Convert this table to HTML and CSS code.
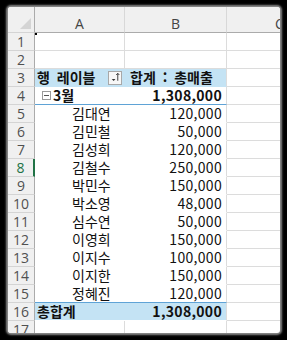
FILE: index.html
```html
<!DOCTYPE html>
<html lang="ko">
<head>
<meta charset="utf-8">
<link rel="stylesheet" href="styles.css">
</head>
<body>
<div class="frame">
  <div class="row head">
    <div class="rh corner"><span class="tri"></span></div>
    <div class="ch">A</div>
    <div class="ch">B</div>
    <div class="ch">C</div>
  </div>
  <div class="row"><div class="rh">1</div><div class="c first"></div><div class="c"></div><div class="c"></div></div>
  <div class="row"><div class="rh">2</div><div class="c"></div><div class="c"></div><div class="c"></div></div>
  <div class="row">
    <div class="rh">3</div>
    <div class="c pa top"><span class="b ws">행 레이블</span>
      <span class="fbtn"><svg width="13" height="13" viewBox="0 0 13 13"><path d="M3 8h4l-2 2.2z" fill="#333"/><path d="M9.5 2v8M7.8 3.8L9.5 2l1.7 1.8" stroke="#333" stroke-width="1" fill="none"/></svg></span>
    </div>
    <div class="c pb top"><span class="b ws">합계 : 총매출</span></div>
    <div class="c"></div>
  </div>
  <div class="row">
    <div class="rh">4</div>
    <div class="c pa grp"><span class="mbox"></span><span class="b">3월</span></div>
    <div class="c pb grp num b">1,308,000</div>
    <div class="c"></div>
  </div>
  <div class="row"><div class="rh">5</div><div class="c pa nm">김대연</div><div class="c pb num">120,000</div><div class="c"></div></div>
  <div class="row"><div class="rh">6</div><div class="c pa nm">김민철</div><div class="c pb num">50,000</div><div class="c"></div></div>
  <div class="row"><div class="rh">7</div><div class="c pa nm">김성희</div><div class="c pb num">120,000</div><div class="c"></div></div>
  <div class="row"><div class="rh sel">8</div><div class="c pa nm">김철수</div><div class="c pb num">250,000</div><div class="c"></div></div>
  <div class="row"><div class="rh">9</div><div class="c pa nm">박민수</div><div class="c pb num">150,000</div><div class="c"></div></div>
  <div class="row"><div class="rh">10</div><div class="c pa nm">박소영</div><div class="c pb num">48,000</div><div class="c"></div></div>
  <div class="row"><div class="rh">11</div><div class="c pa nm">심수연</div><div class="c pb num">50,000</div><div class="c"></div></div>
  <div class="row"><div class="rh">12</div><div class="c pa nm">이영희</div><div class="c pb num">150,000</div><div class="c"></div></div>
  <div class="row"><div class="rh">13</div><div class="c pa nm">이지수</div><div class="c pb num">100,000</div><div class="c"></div></div>
  <div class="row"><div class="rh">14</div><div class="c pa nm">이지한</div><div class="c pb num">150,000</div><div class="c"></div></div>
  <div class="row"><div class="rh">15</div><div class="c pa nm last">정혜진</div><div class="c pb num last">120,000</div><div class="c"></div></div>
  <div class="row">
    <div class="rh">16</div>
    <div class="c pa tot"><span class="b">총합계</span></div>
    <div class="c pb tot num b">1,308,000</div>
    <div class="c"></div>
  </div>
  <div class="row"><div class="rh">17</div><div class="c"></div><div class="c"></div><div class="c"></div></div>
</div>
</body>
</html>
```

FILE: styles.css
```css
html, body {
  margin: 0;
  padding: 0;
  background: #000;
}
body {
  width: 287px;
  height: 340px;
  overflow: hidden;
  padding: 7px 0 0 8px;
  box-sizing: border-box;
  font-family: "Noto Sans CJK KR", "Noto Sans", sans-serif;
}
.frame {
  width: 272px;
  height: 326px;
  background: #fff;
  overflow: hidden;
  border-radius: 3px;
  box-shadow: 0 0 2px 2px #8a8a8a;
}
.row {
  display: grid;
  grid-template-columns: 27px 90px 102px 106px;
  height: 18px;
}
.row > div {
  box-sizing: border-box;
  height: 18px;
  border-right: 1px solid #dcdcdc;
  border-bottom: 1px solid #dcdcdc;
  font-size: 14px;
  line-height: 17px;
  white-space: nowrap;
  color: #111;
}
.row.head {
  height: 26px;
}
.row.head > div {
  height: 26px;
  background: #f0f0f0;
  border-bottom: 1px solid #ababab;
  border-right: 1px solid #d8d8d8;
  text-align: center;
  line-height: 14px;
  padding-top: 10px;
  font-family: "Open Sans", "Noto Sans", sans-serif;
  font-size: 14px;
  color: #444;
}
.corner {
  position: relative;
}
.tri {
  position: absolute;
  right: 3px;
  bottom: 3px;
  width: 0;
  height: 0;
  border-left: 11px solid transparent;
  border-bottom: 11px solid #d4d4d4;
}
.first {
  position: relative;
}
.first::before {
  content: "";
  position: absolute;
  left: 0;
  top: 0;
  width: 2px;
  height: 2px;
  background: #000;
}
.rh {
  background: #f0f0f0;
  text-align: center;
  font-family: "Open Sans", "Noto Sans", sans-serif;
  font-size: 14px !important;
  color: #505050 !important;
  border-right: 1px solid #ababab !important;
  border-bottom-color: #d4d4d4 !important;
}
.rh.sel {
  color: #217346 !important;
  border-right: 2px solid #217346 !important;
}
.b {
  font-weight: 700;
}
.ws {
  word-spacing: 3px;
}
.pa {
  border-right: none !important;
  border-bottom-color: #fff !important;
  padding-left: 2px;
  display: flex;
  align-items: center;
}
.pb {
  border-bottom-color: #fff !important;
  padding-left: 5px;
}
.top {
  background: #c4e3f4;
  border-bottom-color: #c4e3f4 !important;
}
.pa.top {
  justify-content: space-between;
  padding-right: 3px;
}
.grp {
  border-bottom-color: #5fa3d6 !important;
}
.last {
  border-bottom-color: #5fa3d6 !important;
}
.tot {
  background: #c4e3f4;
}
.num {
  text-align: right;
  padding-right: 4px;
  letter-spacing: 0.3px;
}
.nm {
  padding-left: 37px;
}
.fbtn {
  width: 14px;
  height: 14px;
  box-sizing: border-box;
  border: 1px solid #a8a8a8;
  background: #f7f7f7;
  display: flex;
  align-items: center;
  justify-content: center;
}
.mbox {
  width: 9px;
  height: 9px;
  box-sizing: border-box;
  border: 1px solid #9a9a9a;
  margin: 0 2px 0 5px;
  position: relative;
}
.mbox::after {
  content: "";
  position: absolute;
  left: 1px;
  right: 1px;
  top: 3px;
  height: 1px;
  background: #555;
}
```
